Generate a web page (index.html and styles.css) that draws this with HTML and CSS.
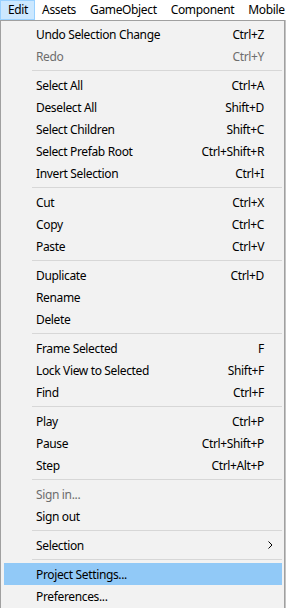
FILE: index.html
```html
<!DOCTYPE html>
<html>
<head>
<meta charset="utf-8">
<link rel="stylesheet" href="styles.css">
</head>
<body>
<div class="menubar">
  <span class="mb-item active">Edit</span>
  <span class="mb-item">Assets</span>
  <span class="mb-item">GameObject</span>
  <span class="mb-item">Component</span>
  <span class="mb-item">Mobile</span>
</div>
<div class="menu">
  <div class="item"><span class="label">Undo Selection Change</span><span class="key">Ctrl+Z</span></div>
  <div class="item disabled"><span class="label">Redo</span><span class="key">Ctrl+Y</span></div>
  <div class="sep"></div>
  <div class="item"><span class="label">Select All</span><span class="key">Ctrl+A</span></div>
  <div class="item"><span class="label">Deselect All</span><span class="key">Shift+D</span></div>
  <div class="item"><span class="label">Select Children</span><span class="key">Shift+C</span></div>
  <div class="item"><span class="label">Select Prefab Root</span><span class="key">Ctrl+Shift+R</span></div>
  <div class="item"><span class="label">Invert Selection</span><span class="key">Ctrl+I</span></div>
  <div class="sep"></div>
  <div class="item"><span class="label">Cut</span><span class="key">Ctrl+X</span></div>
  <div class="item"><span class="label">Copy</span><span class="key">Ctrl+C</span></div>
  <div class="item"><span class="label">Paste</span><span class="key">Ctrl+V</span></div>
  <div class="sep"></div>
  <div class="item"><span class="label">Duplicate</span><span class="key">Ctrl+D</span></div>
  <div class="item"><span class="label">Rename</span></div>
  <div class="item"><span class="label">Delete</span></div>
  <div class="sep"></div>
  <div class="item"><span class="label">Frame Selected</span><span class="key">F</span></div>
  <div class="item"><span class="label">Lock View to Selected</span><span class="key">Shift+F</span></div>
  <div class="item"><span class="label">Find</span><span class="key">Ctrl+F</span></div>
  <div class="sep"></div>
  <div class="item"><span class="label">Play</span><span class="key">Ctrl+P</span></div>
  <div class="item"><span class="label">Pause</span><span class="key">Ctrl+Shift+P</span></div>
  <div class="item"><span class="label">Step</span><span class="key">Ctrl+Alt+P</span></div>
  <div class="sep"></div>
  <div class="item disabled"><span class="label">Sign in...</span></div>
  <div class="item"><span class="label">Sign out</span></div>
  <div class="sep"></div>
  <div class="item submenu"><span class="label">Selection</span><svg class="chev" width="5" height="8" viewBox="0 0 5 8"><polyline points="0.5,0.5 4,4 0.5,7.5" fill="none" stroke="#000" stroke-width="1"/></svg></div>
  <div class="sep"></div>
  <div class="item hover"><span class="label">Project Settings...</span></div>
  <div class="item"><span class="label">Preferences...</span></div>
</div>
</body>
</html>
```

FILE: styles.css
```css
html, body {
  margin: 0;
  padding: 0;
  background: #ffffff;
  overflow: hidden;
}
body {
  width: 286px;
  height: 608px;
  font-family: "Noto Sans", "DejaVu Sans", sans-serif;
  font-size: 12px;
  letter-spacing: -0.35px;
  color: #000;
}
.menubar {
  display: flex;
  height: 20px;
  background: #ffffff;
  white-space: nowrap;
  overflow: hidden;
}
.mb-item {
  box-sizing: border-box;
  height: 20px;
  line-height: 18px;
  padding: 0 6px;
  border: 1px solid transparent;
}
.mb-item.active {
  background: #cce8ff;
  border-color: #99d1ff;
  padding: 0 6px 0 7px;
}
.menu {
  box-sizing: border-box;
  width: 285px;
  background: #f2f2f2;
  border: 1px solid #a0a0a0;
  border-bottom: none;
  padding: 2px 2px 2px 3px;
  box-shadow: 1px 0 0 #c4c4c4;
}
.item {
  display: flex;
  align-items: center;
  height: 22px;
  padding: 0 18px 0 32px;
  white-space: nowrap;
}
.item .label {
  flex: 1;
}
.item.disabled {
  color: #6d6d6d;
}
.item.hover {
  background: #91c9f7;
}
.item.submenu {
  padding-right: 9px;
}
.chev {
  display: block;
}
.sep {
  height: 1px;
  margin: 3px 0 3px 28px;
  background: #d7d7d7;
}
```
